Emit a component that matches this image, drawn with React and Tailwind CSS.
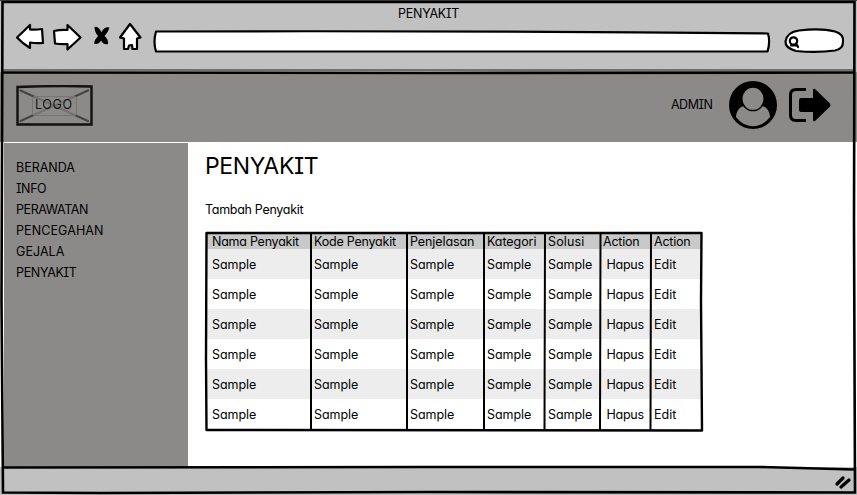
import React from "react";

const menu = [
  ["BERANDA", "tracking-[-0.02px]"],
  ["INFO", "tracking-[-0.4px]"],
  ["PERAWATAN", "tracking-[-0.4px]"],
  ["PENCEGAHAN", "tracking-[0.1px]"],
  ["GEJALA", "tracking-[0.05px]"],
  ["PENYAKIT", "tracking-[-0.32px]"],
];

const columns = [
  ["Nama Penyakit", "pl-[6px] tracking-[-0.25px]"],
  ["Kode Penyakit", "pl-[3px] tracking-[-0.22px]"],
  ["Penjelasan", "pl-[3px] tracking-[-0.08px]"],
  ["Kategori", "pl-[3px] tracking-[-0.07px]"],
  ["Solusi", "pl-[3px] tracking-[0.12px]"],
  ["Action", "pl-[3px] tracking-[-0.22px]"],
  ["Action", "pl-[3px] tracking-[-0.22px]"],
];
const row = [
  ["Sample", "pl-[6px] tracking-[-0.05px]"],
  ["Sample", "pl-[3px] tracking-[-0.05px]"],
  ["Sample", "pl-[3px] tracking-[-0.05px]"],
  ["Sample", "pl-[3px] tracking-[-0.05px]"],
  ["Sample", "pl-[3px] tracking-[-0.05px]"],
  ["Hapus", "pl-[6.5px] tracking-[-0.25px]"],
  ["Edit", "pl-[3px] tracking-[0.05px]"],
];
const grid = "grid grid-cols-[105px_96px_77px_61px_55px_51px_51px]";

function TitleBar() {
  return (
    <div className="flex h-[72px] flex-col bg-[#c1c1c1]">
      <div className="h-[22px] pt-[5px] text-center leading-[18px] tracking-[-0.27px]">PENYAKIT</div>
      <svg className="h-[50px] w-[857px] shrink-0" viewBox="0 22 857 50" fill="#fff" stroke="#000" strokeWidth="2.200" strokeLinejoin="round" strokeLinecap="round">
        <path d="M17 37.500 30 25V29.500Q36 30 42 29L43 43Q36 43.500 30 42.500V48Q22 43 17 37.500Z" />
        <path d="M54 31Q60 29.500 67.500 30V25L80.500 37.500 67.500 49.500V44Q61 44.500 55 43.500Z" />
        <path d="M94.500 27Q98 26 101.500 32 104.500 26 109.500 27.500 108 33 104.500 36 108.500 39 108 44 104 45.500 101 40.500 98.500 45 94 43.500 94.500 39.500 98 36 94.500 32 94.500 27Z" fill="#000" stroke="none" />
        <path d="M130 24 120 37.500 124 38.500V49H128L129 45.500 132 45 132.500 49H137V38.500L140.500 37.500Z" />
        <path d="M156 31.500Q460 30.500 768 33.500 770.500 42 767.500 51.500H156Q153 42 156 31.500Z" />
        <path d="M799 30.500Q821 28 835 31.500 844 34 843 42 843 49 835 50.500 817 53 796 51 785 48 785.500 41.500 787 32 799 30.500Z" />
        <circle cx="793.500" cy="41" r="3.700" fill="none" />
        <path d="M791 45.500H797.500M796 43.500 798 47" />
        <path d="M3 70H853" stroke="#707070" />
      </svg>
    </div>
  );
}

function Logo() {
  return (
    <div className="relative h-[41px] w-[77px]">
      <svg className="absolute inset-0 h-full w-full" viewBox="0 0 77 41" fill="none">
        <path d="M1.500 2Q40 0.500 75.500 1.500V39.500L1.500 39.500Z" stroke="#111" strokeWidth="2.400" />
        <path d="M4.500 5.500 72 36M72 5.500 4.500 36" stroke="#454545" strokeWidth="2.200" strokeLinecap="round" />
        <rect x="16.500" y="11.500" width="44" height="19" rx="2" fill="#8c8a88" fillOpacity=".65" stroke="#777573" />
      </svg>
      <div className="relative pl-[19px] pt-[10px] leading-[20px] tracking-[0.6px] text-[#111]">LOGO</div>
    </div>
  );
}

function Header() {
  return (
    <header className="flex h-[70px] bg-[#8c8a88] pl-4">
      <div className="pt-[13px]"><Logo /></div>
      <div className="ml-[578px] w-[58px] pt-[23px] leading-[20px] tracking-[-0.5px]">ADMIN</div>
      <svg className="mt-[9px] h-[48px] w-[48px] shrink-0" viewBox="0 0 48 48">
        <circle cx="24" cy="24" r="24" />
        <path d="M7 36C7.500 30 10 26 15.500 25Q24 33 32.500 25C38 26 40.500 30 41 36Q34 45.200 24 45.200 14 45.200 7 36Z" fill="#8c8a88" />
        <ellipse cx="24" cy="17.800" rx="11.200" ry="11.800" fill="#8c8a88" stroke="#000" strokeWidth="1.500" />
      </svg>
      <svg className="ml-[12px] mt-[16px] h-[34px] w-[42px] shrink-0" viewBox="0 0 42 34">
        <path d="M17 1.500H7Q1.500 1.500 1.500 7V27Q1.500 32.500 7 32.500H17" fill="none" stroke="#000" strokeWidth="3" />
        <path d="M12 10H24V2Q24 0 26 1L41 15.500Q42 17 41 18.500L26 33Q24 34 24 32V24H12Q10 24 10 22V12Q10 10 12 10Z" />
      </svg>
    </header>
  );
}

function Table() {
  return (
    <div className="relative w-[496px]">
      <div className={grid + " h-[17px] bg-[#c9c9c9]"}>
        {columns.map(([text, style], i) => (
          <div key={i} className={"whitespace-nowrap leading-[19px] " + style}>{text}</div>
        ))}
      </div>
      {[0, 1, 2, 3, 4, 5].map((n) => (
        <div key={n} className={grid + " h-[30px] " + (n % 2 ? "bg-white" : "bg-[#ededed]")}>
          {row.map(([text, style], i) => (
            <div key={i} className={"leading-[31px] " + style}>{text}</div>
          ))}
        </div>
      ))}
      <svg className="pointer-events-none absolute -left-[2px] -top-[2px] h-[202px] w-[502px]" viewBox="204 230 502 202" fill="none" stroke="#000" strokeWidth="2.400" strokeLinejoin="round">
        <path d="M206.500 233Q450 234 701.500 233L701 300 702 430.500Q450 429.500 206.500 430L206 360Z" />
        <path d="M311 234V430M407 234V430M484 234V430M545 234 544.500 430M600.500 234 600 430M651 234 650.500 430" strokeWidth="2" />
      </svg>
    </div>
  );
}

export default function App() {
  return (
    <div className="relative flex h-[495px] w-[857px] flex-col overflow-hidden bg-[#c1c1c1] font-['Inter',sans-serif] text-[12.5px] font-normal text-black [font-feature-settings:'cv11','cv08']">
      <TitleBar />
      <Header />
      <div className="flex h-[325px] bg-white pl-1">
        <nav className="mt-px w-[184px] bg-[#8c8a88] pl-3 pt-[14px]">
          {menu.map(([label, tracking]) => (
            <div key={label} className={"h-[21px] leading-[21px] " + tracking}>{label}</div>
          ))}
        </nav>
        <main className="pl-[18px] pt-[8px]">
          <h1 className="-ml-px h-[32px] text-[23px] font-normal leading-[32px] tracking-[-0.35px]">PENYAKIT</h1>
          <div className="-ml-px mt-[18px] h-[19px] leading-[20px] tracking-[-0.3px]">Tambah Penyakit</div>
          <div className="mt-[13px]"><Table /></div>
        </main>
      </div>
      <footer className="flex h-[28px] justify-end bg-[#c1c1c1] pr-[5px]">
        <svg className="mt-[8px] h-[15px] w-[18px]" viewBox="834 475 18 15" stroke="#000" strokeWidth="3.300" strokeLinecap="round">
          <path d="M837 484 843 478M841 487 849 480" />
        </svg>
      </footer>
      <svg className="pointer-events-none absolute inset-0 h-full w-full" viewBox="0 0 857 495" fill="none" stroke="#000" strokeWidth="2.600">
        <path d="M0 .5H857" stroke="#444" strokeWidth="1" />
        <path d="M2.500 2H854.500L854 220 855 492.500 430 492 100 493 3 492.500 1.500 300 2.500 2Z" />
        <path d="M3 72.500 430 73 854 72.500M3 467.500 420 467 760 467 854 469.500" />
      </svg>
    </div>
  );
}
